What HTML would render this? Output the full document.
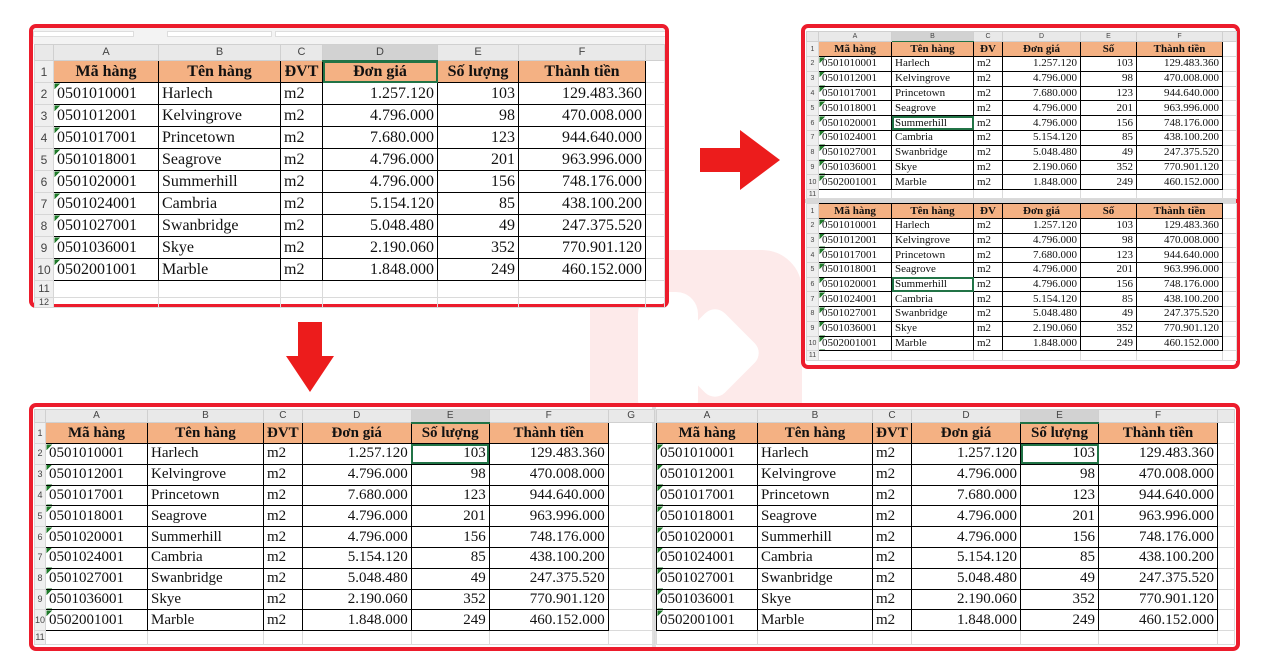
<!DOCTYPE html>
<html><head><meta charset="utf-8">
<style>
*{margin:0;padding:0;box-sizing:border-box}
body{width:1280px;height:670px;background:#fff;position:relative;overflow:hidden;font-family:"Liberation Serif",serif}
.panel{position:absolute;border:4px solid #ec1c2c;border-radius:7px;background:#fff;overflow:hidden}
table{position:absolute;border-collapse:collapse;table-layout:fixed;color:#111}
td{white-space:nowrap;overflow:hidden;padding:0 3px;border:1px solid #000;line-height:1}
td.n{background:#efefef;border:1px solid #d6d6d6;font-family:"Liberation Sans",sans-serif;color:#444;text-align:center;padding:0}
tr.ch td{background:#e9e9e9;border:1px solid #d0d0d0;font-family:"Liberation Sans",sans-serif;color:#444;text-align:center;font-weight:normal}
tr.ch td.s{background:#d2d2d2;border-bottom:2px solid #217346}
tr.h td.c{background:#f4b183;font-weight:bold;text-align:center}
td.a{background:linear-gradient(135deg,#1f7a2a 4px,transparent 4px)}
td.r{text-align:right}
td.x{border:1px solid #dadada;border-top-color:#dadada}
td.sel{outline:2px solid #217346;outline-offset:-2px}
</style></head><body>

<!-- watermark -->
<div style="position:absolute;left:590px;top:250px;width:212px;height:215px;background:#fdeaea;border-radius:40px"></div>
<div style="position:absolute;left:638px;top:292px;width:60px;height:130px;background:#fff;border-radius:22px"></div>
<div style="position:absolute;left:680px;top:318px;width:70px;height:70px;background:#fff;border-radius:14px;transform:rotate(45deg)"></div>

<!-- arrows -->
<svg style="position:absolute;left:698px;top:128px" width="84" height="64"><polygon points="2,20 42,20 42,2 82,32 42,62 42,44 2,44" fill="#ec1c1c"/></svg>
<svg style="position:absolute;left:284px;top:320px" width="52" height="74"><polygon points="14,2 38,2 38,36 50,36 26,72 2,36 14,36" fill="#ec1c1c"/></svg>

<!-- Panel 1 -->
<div class="panel" style="left:29px;top:24px;width:640px;height:284px">
 <div style="position:absolute;left:0;top:0;width:640px;height:16px;background:#f3f3f3"></div>
 <div style="position:absolute;left:0;top:3px;width:101px;height:6px;background:#fff;border:1px solid #ddd"></div>
 <div style="position:absolute;left:134px;top:3px;width:105px;height:6px;background:#fff;border:1px solid #ddd"></div>
 <div style="position:absolute;left:242px;top:3px;width:400px;height:6px;background:#fff;border:1px solid #ddd"></div>
</div>
<table style="left:34px;top:44px;font-size:16px">
<colgroup><col style="width:19px"><col style="width:105px"><col style="width:122px"><col style="width:42px"><col style="width:115px"><col style="width:81px"><col style="width:127px"><col style="width:19px"></colgroup>
<tr class="ch" style="height:16px;font-size:11px"><td></td><td>A</td><td>B</td><td>C</td><td class="s">D</td><td>E</td><td>F</td><td></td></tr>
<tr class="h" style="height:22px"><td class="n" style="font-size:12px">1</td><td class="c">Mã hàng</td><td class="c">Tên hàng</td><td class="c">ĐVT</td><td class="c sel">Đơn giá</td><td class="c">Số lượng</td><td class="c">Thành tiền</td><td class="x"></td></tr>
<tr style="height:22px"><td class="n" style="font-size:12px">2</td><td class="a">0501010001</td><td>Harlech</td><td>m2</td><td class="r">1.257.120</td><td class="r">103</td><td class="r">129.483.360</td><td class="x"></td></tr>
<tr style="height:22px"><td class="n" style="font-size:12px">3</td><td class="a">0501012001</td><td>Kelvingrove</td><td>m2</td><td class="r">4.796.000</td><td class="r">98</td><td class="r">470.008.000</td><td class="x"></td></tr>
<tr style="height:22px"><td class="n" style="font-size:12px">4</td><td class="a">0501017001</td><td>Princetown</td><td>m2</td><td class="r">7.680.000</td><td class="r">123</td><td class="r">944.640.000</td><td class="x"></td></tr>
<tr style="height:22px"><td class="n" style="font-size:12px">5</td><td class="a">0501018001</td><td>Seagrove</td><td>m2</td><td class="r">4.796.000</td><td class="r">201</td><td class="r">963.996.000</td><td class="x"></td></tr>
<tr style="height:22px"><td class="n" style="font-size:12px">6</td><td class="a">0501020001</td><td>Summerhill</td><td>m2</td><td class="r">4.796.000</td><td class="r">156</td><td class="r">748.176.000</td><td class="x"></td></tr>
<tr style="height:22px"><td class="n" style="font-size:12px">7</td><td class="a">0501024001</td><td>Cambria</td><td>m2</td><td class="r">5.154.120</td><td class="r">85</td><td class="r">438.100.200</td><td class="x"></td></tr>
<tr style="height:22px"><td class="n" style="font-size:12px">8</td><td class="a">0501027001</td><td>Swanbridge</td><td>m2</td><td class="r">5.048.480</td><td class="r">49</td><td class="r">247.375.520</td><td class="x"></td></tr>
<tr style="height:22px"><td class="n" style="font-size:12px">9</td><td class="a">0501036001</td><td>Skye</td><td>m2</td><td class="r">2.190.060</td><td class="r">352</td><td class="r">770.901.120</td><td class="x"></td></tr>
<tr style="height:22px"><td class="n" style="font-size:12px">10</td><td class="a">0502001001</td><td>Marble</td><td>m2</td><td class="r">1.848.000</td><td class="r">249</td><td class="r">460.152.000</td><td class="x"></td></tr>
<tr style="height:17px"><td class="n" style="font-size:11px">11</td><td class="x"></td><td class="x"></td><td class="x"></td><td class="x"></td><td class="x"></td><td class="x"></td><td class="x"></td></tr>
<tr style="height:10px"><td class="n" style="font-size:9px">12</td><td class="x"></td><td class="x"></td><td class="x"></td><td class="x"></td><td class="x"></td><td class="x"></td><td class="x"></td></tr>
</table>

<!-- Panel 2 -->
<div class="panel" style="left:801px;top:24px;width:439px;height:345px"></div>
<div style="position:absolute;left:805px;top:199px;width:431px;height:4px;background:#d8d8d8"></div>
<table style="left:806px;top:31px;font-size:11px">
<colgroup><col style="width:12px"><col style="width:73px"><col style="width:82px"><col style="width:29px"><col style="width:78px"><col style="width:56px"><col style="width:86px"><col style="width:14px"></colgroup>
<tr class="ch" style="height:10px;font-size:7px"><td></td><td>A</td><td class="s" style="border-bottom-width:1px">B</td><td>C</td><td>D</td><td>E</td><td>F</td><td></td></tr>
<tr class="h" style="height:15px"><td class="n" style="font-size:7px">1</td><td class="c">Mã hàng</td><td class="c">Tên hàng</td><td class="c">ĐV</td><td class="c">Đơn giá</td><td class="c">Số</td><td class="c">Thành tiền</td><td class="x"></td></tr>
<tr style="height:14.8px"><td class="n" style="font-size:7px">2</td><td class="a">0501010001</td><td>Harlech</td><td>m2</td><td class="r">1.257.120</td><td class="r">103</td><td class="r">129.483.360</td><td class="x"></td></tr>
<tr style="height:14.8px"><td class="n" style="font-size:7px">3</td><td class="a">0501012001</td><td>Kelvingrove</td><td>m2</td><td class="r">4.796.000</td><td class="r">98</td><td class="r">470.008.000</td><td class="x"></td></tr>
<tr style="height:14.8px"><td class="n" style="font-size:7px">4</td><td class="a">0501017001</td><td>Princetown</td><td>m2</td><td class="r">7.680.000</td><td class="r">123</td><td class="r">944.640.000</td><td class="x"></td></tr>
<tr style="height:14.8px"><td class="n" style="font-size:7px">5</td><td class="a">0501018001</td><td>Seagrove</td><td>m2</td><td class="r">4.796.000</td><td class="r">201</td><td class="r">963.996.000</td><td class="x"></td></tr>
<tr style="height:14.8px"><td class="n" style="font-size:7px">6</td><td class="a">0501020001</td><td class="sel">Summerhill</td><td>m2</td><td class="r">4.796.000</td><td class="r">156</td><td class="r">748.176.000</td><td class="x"></td></tr>
<tr style="height:14.8px"><td class="n" style="font-size:7px">7</td><td class="a">0501024001</td><td>Cambria</td><td>m2</td><td class="r">5.154.120</td><td class="r">85</td><td class="r">438.100.200</td><td class="x"></td></tr>
<tr style="height:14.8px"><td class="n" style="font-size:7px">8</td><td class="a">0501027001</td><td>Swanbridge</td><td>m2</td><td class="r">5.048.480</td><td class="r">49</td><td class="r">247.375.520</td><td class="x"></td></tr>
<tr style="height:14.8px"><td class="n" style="font-size:7px">9</td><td class="a">0501036001</td><td>Skye</td><td>m2</td><td class="r">2.190.060</td><td class="r">352</td><td class="r">770.901.120</td><td class="x"></td></tr>
<tr style="height:14.8px"><td class="n" style="font-size:7px">10</td><td class="a">0502001001</td><td>Marble</td><td>m2</td><td class="r">1.848.000</td><td class="r">249</td><td class="r">460.152.000</td><td class="x"></td></tr>
<tr style="height:9px"><td class="n" style="font-size:7px">11</td><td class="x"></td><td class="x"></td><td class="x"></td><td class="x"></td><td class="x"></td><td class="x"></td><td class="x"></td></tr>
</table>
<table style="left:806px;top:203px;font-size:11px">
<colgroup><col style="width:12px"><col style="width:73px"><col style="width:82px"><col style="width:29px"><col style="width:78px"><col style="width:56px"><col style="width:86px"><col style="width:14px"></colgroup>
<tr class="h" style="height:15px"><td class="n" style="font-size:7px">1</td><td class="c">Mã hàng</td><td class="c">Tên hàng</td><td class="c">ĐV</td><td class="c">Đơn giá</td><td class="c">Số</td><td class="c">Thành tiền</td><td class="x"></td></tr>
<tr style="height:14.7px"><td class="n" style="font-size:7px">2</td><td class="a">0501010001</td><td>Harlech</td><td>m2</td><td class="r">1.257.120</td><td class="r">103</td><td class="r">129.483.360</td><td class="x"></td></tr>
<tr style="height:14.7px"><td class="n" style="font-size:7px">3</td><td class="a">0501012001</td><td>Kelvingrove</td><td>m2</td><td class="r">4.796.000</td><td class="r">98</td><td class="r">470.008.000</td><td class="x"></td></tr>
<tr style="height:14.7px"><td class="n" style="font-size:7px">4</td><td class="a">0501017001</td><td>Princetown</td><td>m2</td><td class="r">7.680.000</td><td class="r">123</td><td class="r">944.640.000</td><td class="x"></td></tr>
<tr style="height:14.7px"><td class="n" style="font-size:7px">5</td><td class="a">0501018001</td><td>Seagrove</td><td>m2</td><td class="r">4.796.000</td><td class="r">201</td><td class="r">963.996.000</td><td class="x"></td></tr>
<tr style="height:14.7px"><td class="n" style="font-size:7px">6</td><td class="a">0501020001</td><td class="sel">Summerhill</td><td>m2</td><td class="r">4.796.000</td><td class="r">156</td><td class="r">748.176.000</td><td class="x"></td></tr>
<tr style="height:14.7px"><td class="n" style="font-size:7px">7</td><td class="a">0501024001</td><td>Cambria</td><td>m2</td><td class="r">5.154.120</td><td class="r">85</td><td class="r">438.100.200</td><td class="x"></td></tr>
<tr style="height:14.7px"><td class="n" style="font-size:7px">8</td><td class="a">0501027001</td><td>Swanbridge</td><td>m2</td><td class="r">5.048.480</td><td class="r">49</td><td class="r">247.375.520</td><td class="x"></td></tr>
<tr style="height:14.7px"><td class="n" style="font-size:7px">9</td><td class="a">0501036001</td><td>Skye</td><td>m2</td><td class="r">2.190.060</td><td class="r">352</td><td class="r">770.901.120</td><td class="x"></td></tr>
<tr style="height:14.7px"><td class="n" style="font-size:7px">10</td><td class="a">0502001001</td><td>Marble</td><td>m2</td><td class="r">1.848.000</td><td class="r">249</td><td class="r">460.152.000</td><td class="x"></td></tr>
<tr style="height:10px"><td class="n" style="font-size:7px">11</td><td class="x"></td><td class="x"></td><td class="x"></td><td class="x"></td><td class="x"></td><td class="x"></td><td class="x"></td></tr>
</table>

<!-- Panel 3 -->
<div class="panel" style="left:29px;top:403px;width:1211px;height:248px"></div>
<div style="position:absolute;left:652px;top:407px;width:4px;height:240px;background:#e0e0e0"></div>
<table style="left:34px;top:409px;font-size:15px">
<colgroup><col style="width:10px"><col style="width:102px"><col style="width:116px"><col style="width:38px"><col style="width:109px"><col style="width:78px"><col style="width:119px"><col style="width:46px"></colgroup>
<tr class="ch" style="height:13px;font-size:10px"><td></td><td>A</td><td>B</td><td>C</td><td>D</td><td class="s">E</td><td>F</td><td>G</td></tr>
<tr class="h" style="height:21px"><td class="n" style="font-size:9px">1</td><td class="c">Mã hàng</td><td class="c">Tên hàng</td><td class="c">ĐVT</td><td class="c">Đơn giá</td><td class="c">Số lượng</td><td class="c">Thành tiền</td><td class="x"></td></tr>
<tr style="height:20.8px"><td class="n" style="font-size:9px">2</td><td class="a">0501010001</td><td>Harlech</td><td>m2</td><td class="r">1.257.120</td><td class="r sel">103</td><td class="r">129.483.360</td><td class="x"></td></tr>
<tr style="height:20.8px"><td class="n" style="font-size:9px">3</td><td class="a">0501012001</td><td>Kelvingrove</td><td>m2</td><td class="r">4.796.000</td><td class="r">98</td><td class="r">470.008.000</td><td class="x"></td></tr>
<tr style="height:20.8px"><td class="n" style="font-size:9px">4</td><td class="a">0501017001</td><td>Princetown</td><td>m2</td><td class="r">7.680.000</td><td class="r">123</td><td class="r">944.640.000</td><td class="x"></td></tr>
<tr style="height:20.8px"><td class="n" style="font-size:9px">5</td><td class="a">0501018001</td><td>Seagrove</td><td>m2</td><td class="r">4.796.000</td><td class="r">201</td><td class="r">963.996.000</td><td class="x"></td></tr>
<tr style="height:20.8px"><td class="n" style="font-size:9px">6</td><td class="a">0501020001</td><td>Summerhill</td><td>m2</td><td class="r">4.796.000</td><td class="r">156</td><td class="r">748.176.000</td><td class="x"></td></tr>
<tr style="height:20.8px"><td class="n" style="font-size:9px">7</td><td class="a">0501024001</td><td>Cambria</td><td>m2</td><td class="r">5.154.120</td><td class="r">85</td><td class="r">438.100.200</td><td class="x"></td></tr>
<tr style="height:20.8px"><td class="n" style="font-size:9px">8</td><td class="a">0501027001</td><td>Swanbridge</td><td>m2</td><td class="r">5.048.480</td><td class="r">49</td><td class="r">247.375.520</td><td class="x"></td></tr>
<tr style="height:20.8px"><td class="n" style="font-size:9px">9</td><td class="a">0501036001</td><td>Skye</td><td>m2</td><td class="r">2.190.060</td><td class="r">352</td><td class="r">770.901.120</td><td class="x"></td></tr>
<tr style="height:20.8px"><td class="n" style="font-size:9px">10</td><td class="a">0502001001</td><td>Marble</td><td>m2</td><td class="r">1.848.000</td><td class="r">249</td><td class="r">460.152.000</td><td class="x"></td></tr>
<tr style="height:14px"><td class="n" style="font-size:9px">11</td><td class="x"></td><td class="x"></td><td class="x"></td><td class="x"></td><td class="x"></td><td class="x"></td><td class="x"></td></tr>
</table>
<table style="left:656px;top:409px;font-size:15px">
<colgroup><col style="width:101px"><col style="width:115px"><col style="width:39px"><col style="width:109px"><col style="width:78px"><col style="width:119px"><col style="width:17px"></colgroup>
<tr class="ch" style="height:13px;font-size:10px"><td>A</td><td>B</td><td>C</td><td>D</td><td class="s">E</td><td>F</td><td></td></tr>
<tr class="h" style="height:21px"><td class="c">Mã hàng</td><td class="c">Tên hàng</td><td class="c">ĐVT</td><td class="c">Đơn giá</td><td class="c">Số lượng</td><td class="c">Thành tiền</td><td class="x"></td></tr>
<tr style="height:20.8px"><td class="a">0501010001</td><td>Harlech</td><td>m2</td><td class="r">1.257.120</td><td class="r sel">103</td><td class="r">129.483.360</td><td class="x"></td></tr>
<tr style="height:20.8px"><td class="a">0501012001</td><td>Kelvingrove</td><td>m2</td><td class="r">4.796.000</td><td class="r">98</td><td class="r">470.008.000</td><td class="x"></td></tr>
<tr style="height:20.8px"><td class="a">0501017001</td><td>Princetown</td><td>m2</td><td class="r">7.680.000</td><td class="r">123</td><td class="r">944.640.000</td><td class="x"></td></tr>
<tr style="height:20.8px"><td class="a">0501018001</td><td>Seagrove</td><td>m2</td><td class="r">4.796.000</td><td class="r">201</td><td class="r">963.996.000</td><td class="x"></td></tr>
<tr style="height:20.8px"><td class="a">0501020001</td><td>Summerhill</td><td>m2</td><td class="r">4.796.000</td><td class="r">156</td><td class="r">748.176.000</td><td class="x"></td></tr>
<tr style="height:20.8px"><td class="a">0501024001</td><td>Cambria</td><td>m2</td><td class="r">5.154.120</td><td class="r">85</td><td class="r">438.100.200</td><td class="x"></td></tr>
<tr style="height:20.8px"><td class="a">0501027001</td><td>Swanbridge</td><td>m2</td><td class="r">5.048.480</td><td class="r">49</td><td class="r">247.375.520</td><td class="x"></td></tr>
<tr style="height:20.8px"><td class="a">0501036001</td><td>Skye</td><td>m2</td><td class="r">2.190.060</td><td class="r">352</td><td class="r">770.901.120</td><td class="x"></td></tr>
<tr style="height:20.8px"><td class="a">0502001001</td><td>Marble</td><td>m2</td><td class="r">1.848.000</td><td class="r">249</td><td class="r">460.152.000</td><td class="x"></td></tr>
<tr style="height:14px"><td class="x"></td><td class="x"></td><td class="x"></td><td class="x"></td><td class="x"></td><td class="x"></td><td class="x"></td></tr>
</table>
</body></html>
